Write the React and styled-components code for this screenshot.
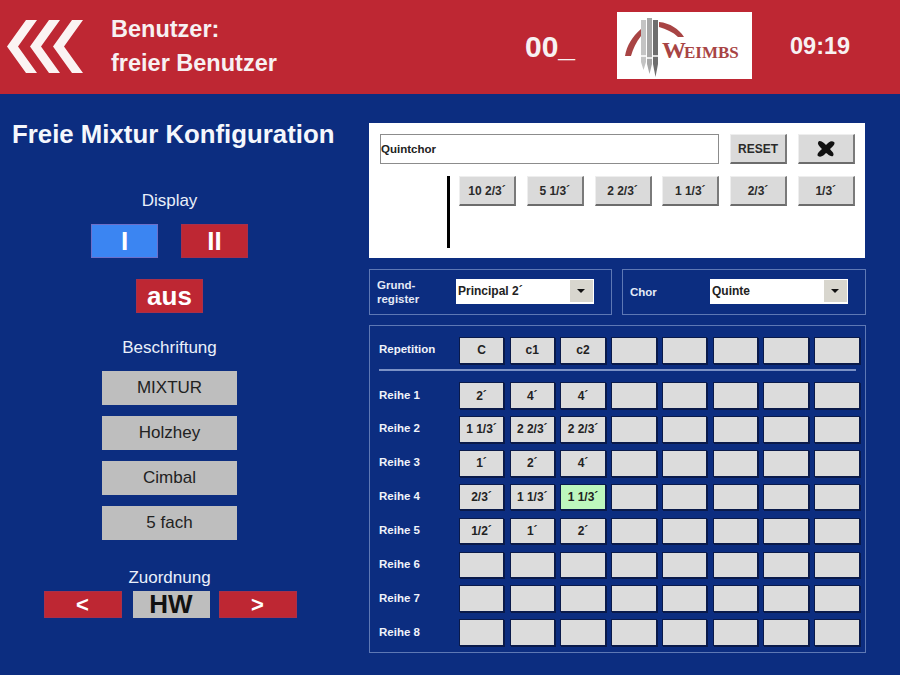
import styled, { createGlobalStyle } from 'styled-components';

const GlobalStyle = createGlobalStyle`
    html, body {
        margin: 0;
        padding: 0;
        background-color: #0C2D80;
        font-family: "Liberation Sans", Arial, sans-serif;
    }
`

const Page = styled.div`
    width: 900px;
    height: 675px;
    overflow: hidden;
    background-color: #0C2D80;
`

const Header = styled.header`
    display: flex;
    align-items: center;
    height: 94px;
    background-color: #BE2733;
    color: #F7F1F2;
    font-weight: 700;
`

const BackIcon = styled.svg`
    width: 78px;
    height: 54px;
    margin-left: 6px;
    flex: none;
`

const UserInfo = styled.div`
    width: 414px;
    margin: -3px 0 0 27px;
    font-size: 23.5px;
    line-height: 34px;
`

const Counter = styled.div`
    width: 92px;
    font-size: 30px;
`

const Logo = styled.svg`
    width: 135px;
    height: 67px;
    margin-top: -3px;
    background-color: #fff;
    flex: none;
`

const Clock = styled.div`
    margin: -2px 0 0 38px;
    font-size: 23.5px;
`

const Main = styled.main`
    display: flex;
`

const LeftColumn = styled.section`
    display: flex;
    flex-direction: column;
    align-items: center;
    width: 339px;
    margin-right: 30px;
    color: #EAF0FA;
`

const Title = styled.h1`
    align-self: flex-start;
    margin: 25px 0 0 12px;
    font-size: 25.8px;
    line-height: 30px;
    font-weight: 700;
    color: #F5F7FC;
    white-space: nowrap;
`

const SectionLabel = styled.div`
    margin-top: ${p => p.$top}px;
    font-size: 17px;
    line-height: 20px;
`

const DisplayRow = styled.div`
    display: flex;
    gap: 23px;
    margin-top: 13px;
`

const DisplayButton = styled.div`
    display: flex;
    align-items: center;
    justify-content: center;
    box-sizing: border-box;
    width: 67px;
    height: 34px;
    margin-top: ${p => p.$top || 0}px;
    font-size: 26px;
    font-weight: 700;
    color: #fff;
    background-color: ${p => (p.$active ? '#3B85F2' : '#BE2733')};
    border: 1px solid ${p => (p.$active ? '#6E6FC8' : '#A9304A')};
`

const LabelList = styled.div`
    display: flex;
    flex-direction: column;
    gap: 11px;
    margin-top: 13px;
`

const LabelButton = styled.div`
    display: flex;
    align-items: center;
    justify-content: center;
    width: 135px;
    height: 34px;
    font-size: 17px;
    color: #222;
    background-color: #BEBEBE;
`

const AssignRow = styled.div`
    display: flex;
    align-items: center;
    margin: 3px 0 0 1px;
`

const ArrowButton = styled.div`
    display: flex;
    align-items: center;
    justify-content: center;
    box-sizing: border-box;
    width: 78px;
    height: 27px;
    font-size: 22px;
    font-weight: 700;
    color: #fff;
    background-color: #BE2733;
    border: 1px solid #A9304A;
`

const ManualBox = styled.div`
    display: flex;
    align-items: center;
    justify-content: center;
    width: 77px;
    height: 27px;
    margin: 0 9px 0 11px;
    font-size: 26px;
    font-weight: 700;
    color: #111;
    background-color: #BEBEBE;
`

const RightColumn = styled.section`
    display: flex;
    flex-direction: column;
    width: 497px;
    padding-top: 29px;
`

const WhitePanel = styled.div`
    box-sizing: border-box;
    width: 496px;
    height: 135px;
    padding: 11px 10px 0 11px;
    background-color: #fff;
`

const NameRow = styled.div`
    display: flex;
    gap: 11px;
`

const NameField = styled.div`
    display: flex;
    align-items: center;
    flex: none;
    box-sizing: border-box;
    width: 339px;
    height: 30px;
    font-size: 11.5px;
    font-weight: 700;
    color: #222;
    border: 1px solid #8C8C8C;
`

const KeyButton = styled.div`
    display: flex;
    align-items: center;
    justify-content: center;
    flex: none;
    box-sizing: border-box;
    width: 57px;
    height: 30px;
    font-size: 12px;
    font-weight: 700;
    color: #2A2A2A;
    background-color: #DADADA;
    border-right: 2px solid #7A7A7A;
    border-bottom: 2px solid #6C6C6C;
    border-top: 1px solid #EEE;
    border-left: 1px solid #EEE;
`

const FootageRow = styled.div`
    display: flex;
    gap: 10.75px;
    margin-top: 12px;
    padding-left: 67px;
    height: 72px;
`

const Divider = styled.div`
    flex: none;
    width: 3px;
    height: 72px;
    margin-right: -1.75px;
    background-color: #000;
`

const SelectRow = styled.div`
    display: flex;
    gap: 10px;
    margin-top: 11px;
`

const SelectPanel = styled.div`
    display: flex;
    align-items: center;
    box-sizing: border-box;
    width: ${p => p.$width}px;
    height: 46px;
    padding-left: 7px;
    border: 1px solid #5E78B4;
`

const SelectLabel = styled.div`
    width: ${p => p.$width}px;
    font-size: 11.5px;
    line-height: 14px;
    font-weight: 700;
    color: #E4EAF6;
`

const SelectBox = styled.div`
    display: flex;
    align-items: center;
    justify-content: space-between;
    box-sizing: border-box;
    width: 137.5px;
    height: 25px;
    margin-top: -2px;
    padding: 0 1px 0 2px;
    font-size: 12px;
    font-weight: 700;
    color: #222;
    background-color: #fff;
`

const SelectArrow = styled.div`
    display: flex;
    align-items: center;
    justify-content: center;
    width: 23px;
    height: 22px;
    background-color: #D8D6CE;

    &::after {
        content: "";
        border-left: 4px solid transparent;
        border-right: 4px solid transparent;
        border-top: 4px solid #111;
    }
`

const GridPanel = styled.div`
    box-sizing: border-box;
    height: 328px;
    margin-top: 10px;
    padding: 11px 0 0 9px;
    border: 1px solid #5E78B4;
`

const CellRow = styled.div`
    display: grid;
    grid-template-columns: 74.5px repeat(8, 45.5px);
    column-gap: 5.25px;
    grid-template-rows: 26.5px;
    align-items: center;
    margin-bottom: 7.35px;
`

const RowLabel = styled.div`
    margin-top: -2px;
    font-size: 11.5px;
    font-weight: 700;
    color: #F0F3FA;
    white-space: nowrap;
`

const Cell = styled.div`
    display: flex;
    align-items: center;
    justify-content: center;
    box-sizing: border-box;
    height: 100%;
    font-size: 12px;
    font-weight: 700;
    color: #222;
    background-color: ${p => (p.$active ? '#BDF7BD' : '#DCDCDC')};
    border: 1px solid #0A1A4A;
    box-shadow: 1px 1px 0 #0A1A4A;
`

const GridLine = styled.div`
    width: 477px;
    height: 2px;
    margin: -2px 0 11.5px;
    background-color: #7C92C6;
`

const footages = ['10 2/3´', '5 1/3´', '2 2/3´', '1 1/3´', '2/3´', '1/3´']
const labels = ['MIXTUR', 'Holzhey', 'Cimbal', '5 fach']
const repetitions = ['C', 'c1', 'c2', '', '', '', '', '']
const rows = [
    ['2´', '4´', '4´'],
    ['1 1/3´', '2 2/3´', '2 2/3´'],
    ['1´', '2´', '4´'],
    ['2/3´', '1 1/3´', '1 1/3´'],
    ['1/2´', '1´', '2´'],
    [],
    [],
    [],
]

function fillRow(values) {
    return Array.from({ length: 8 }, (_, i) => values[i] || '')
}

function App() {
    return (
        <Page>
            <GlobalStyle />
            <Header>
                <BackIcon viewBox="0 0 78 54">
                    <g fill="#FBF3F3">
                        <polygon points="20,0 31,0 12,26.5 31,53 20,53 1,26.5" />
                        <polygon points="43,0 54,0 35,26.5 54,53 43,53 24,26.5" />
                        <polygon points="66,0 77,0 58,26.5 77,53 66,53 47,26.5" />
                    </g>
                </BackIcon>
                <UserInfo>
                    Benutzer:<br />freier Benutzer
                </UserInfo>
                <Counter>00_</Counter>
                <Logo viewBox="0 0 135 67">
                    <path d="M8 44 C10 33 15 25 24 17 L24 24 C19 30 16 37 14 44 Z" fill="#A84444" />
                    <path d="M42 10 C53 11 62 17 67 25 L61 25 C56 20 49 17 42 15 Z" fill="#A84444" />
                    <path d="M24 8 H29 V50 L26.5 58 L24 50 Z" fill="#C4C4C4" />
                    <path d="M30 6 H35 V52 L32.5 62 L30 52 Z" fill="#A6A6A6" />
                    <path d="M36 8 H41 V52 L38.5 65 L36 52 Z" fill="#6E6E6E" />
                    <path d="M24 44 H29 M30 46 H35 M36 44 H41" stroke="#fff" strokeWidth="1.5" />
                    <text x="45" y="46" fontFamily="Liberation Serif" fontWeight="700" fontSize="24" fill="#A84444">W</text>
                    <text x="67" y="46" fontFamily="Liberation Serif" fontWeight="700" fontSize="17" fill="#A84444">EIMBS</text>
                </Logo>
                <Clock>09:19</Clock>
            </Header>
            <Main>
                <LeftColumn>
                    <Title>Freie Mixtur Konfiguration</Title>
                    <SectionLabel $top={42}>Display</SectionLabel>
                    <DisplayRow>
                        <DisplayButton $active>I</DisplayButton>
                        <DisplayButton>II</DisplayButton>
                    </DisplayRow>
                    <DisplayButton $top={21}>aus</DisplayButton>
                    <SectionLabel $top={25}>Beschriftung</SectionLabel>
                    <LabelList>
                        {labels.map(label => (
                            <LabelButton key={label}>{label}</LabelButton>
                        ))}
                    </LabelList>
                    <SectionLabel $top={28}>Zuordnung</SectionLabel>
                    <AssignRow>
                        <ArrowButton>&lt;</ArrowButton>
                        <ManualBox>HW</ManualBox>
                        <ArrowButton>&gt;</ArrowButton>
                    </AssignRow>
                </LeftColumn>
                <RightColumn>
                    <WhitePanel>
                        <NameRow>
                            <NameField>Quintchor</NameField>
                            <KeyButton>RESET</KeyButton>
                            <KeyButton>
                                <svg width="20" height="16" viewBox="0 0 20 16">
                                    <path d="M3 0 C6 0 8 2 10 4 C12 2 15 -1 18 1 C20 3 16 6 14 8 C15 10 19 12 17 15 C14 16 12 13 10 12 C8 14 5 17 2 15 C0 13 4 10 6 8 C4 6 0 3 3 0 Z" fill="#111" />
                                </svg>
                            </KeyButton>
                        </NameRow>
                        <FootageRow>
                            <Divider />
                            {footages.map(f => (
                                <KeyButton key={f}>{f}</KeyButton>
                            ))}
                        </FootageRow>
                    </WhitePanel>
                    <SelectRow>
                        <SelectPanel $width={243}>
                            <SelectLabel $width={79}>Grund-<br />register</SelectLabel>
                            <SelectBox>Principal 2´<SelectArrow /></SelectBox>
                        </SelectPanel>
                        <SelectPanel $width={244}>
                            <SelectLabel $width={80}>Chor</SelectLabel>
                            <SelectBox>Quinte<SelectArrow /></SelectBox>
                        </SelectPanel>
                    </SelectRow>
                    <GridPanel>
                        <CellRow>
                            <RowLabel>Repetition</RowLabel>
                            {repetitions.map((r, i) => (
                                <Cell key={i}>{r}</Cell>
                            ))}
                        </CellRow>
                        <GridLine />
                        {rows.map((row, r) => (
                            <CellRow key={r}>
                                <RowLabel>Reihe {r + 1}</RowLabel>
                                {fillRow(row).map((value, c) => (
                                    <Cell key={c} $active={r === 3 && c === 2}>{value}</Cell>
                                ))}
                            </CellRow>
                        ))}
                    </GridPanel>
                </RightColumn>
            </Main>
        </Page>
    );
}

export default App
